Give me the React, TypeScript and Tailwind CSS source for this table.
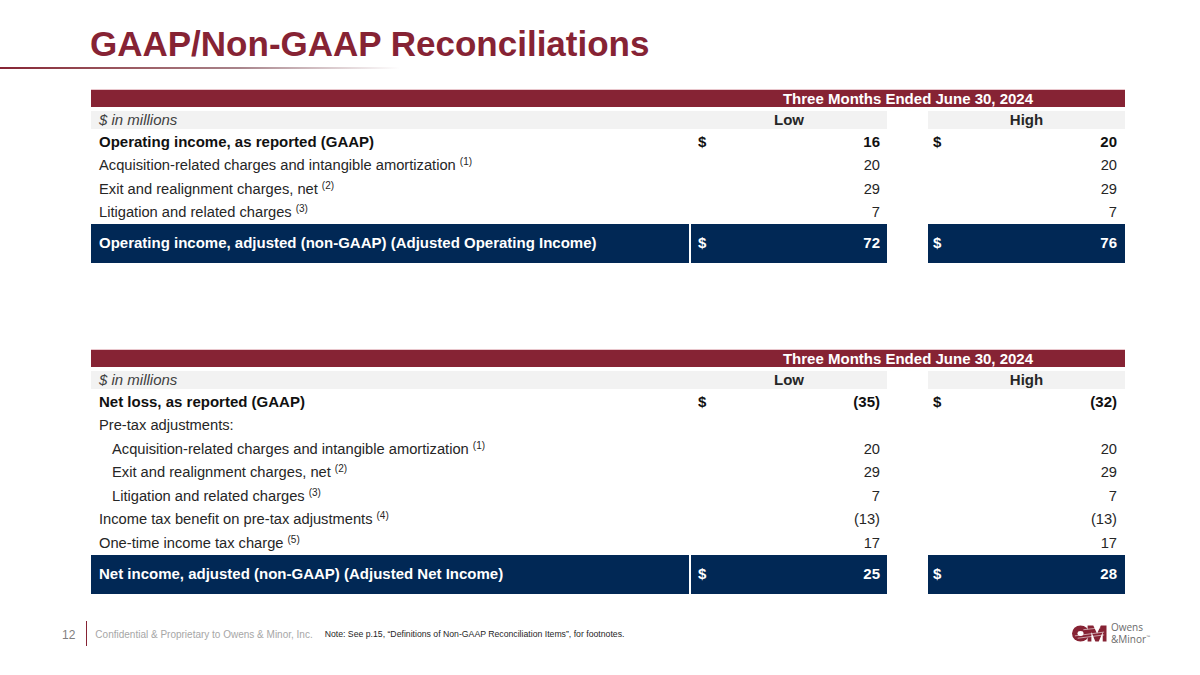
import React from "react";

const MAROON = "bg-[#862334]";

type Line = {
  label: string;
  note?: string;
  low?: string;
  high?: string;
  bold?: boolean;
  dollar?: boolean;
  indent?: boolean;
};

const opRows: Line[] = [
  { label: "Operating income, as reported (GAAP)", low: "16", high: "20", bold: true, dollar: true },
  { label: "Acquisition-related charges and intangible amortization", note: "(1)", low: "20", high: "20" },
  { label: "Exit and realignment charges, net", note: "(2)", low: "29", high: "29" },
  { label: "Litigation and related charges", note: "(3)", low: "7", high: "7" },
];

const netRows: Line[] = [
  { label: "Net loss, as reported (GAAP)", low: "(35)", high: "(32)", bold: true, dollar: true },
  { label: "Pre-tax adjustments:" },
  { label: "Acquisition-related charges and intangible amortization", note: "(1)", low: "20", high: "20", indent: true },
  { label: "Exit and realignment charges, net", note: "(2)", low: "29", high: "29", indent: true },
  { label: "Litigation and related charges", note: "(3)", low: "7", high: "7", indent: true },
  { label: "Income tax benefit on pre-tax adjustments", note: "(4)", low: "(13)", high: "(13)" },
  { label: "One-time income tax charge", note: "(5)", low: "17", high: "17" },
];

function DataRow({ row }: { row: Line }) {
  const weight = row.bold ? "font-bold text-[15px] text-[#111]" : "text-[14.7px] text-[#262626]";
  return (
    <div className={`flex h-[23.5px] items-center ${weight}`}>
      <div className={`w-[600px] ${row.indent ? "pl-[21px]" : "pl-[8px]"}`}>
        {row.label}
        {row.note && <sup className="ml-[4px] text-[10px] font-normal">{row.note}</sup>}
      </div>
      <div className="flex w-[196px] justify-between pl-[7px] pr-[7px]">
        <span>{row.dollar ? "$" : ""}</span>
        <span>{row.low}</span>
      </div>
      <div className="w-[41px]" />
      <div className="flex w-[197px] justify-between pl-[5px] pr-[8px]">
        <span>{row.dollar ? "$" : ""}</span>
        <span>{row.high}</span>
      </div>
    </div>
  );
}

function RecTable({ rows, total, low, high }: { rows: Line[]; total: string; low: string; high: string }) {
  return (
    <div className="ml-[91px] w-[1034px]">
      <div className={`flex h-[18px] ${MAROON} border-t border-[#e9c6cc]`}>
        <div className="w-[600px]" />
        <div className="flex-1 text-center text-[15px] font-bold leading-[17px] text-white">
          Three Months Ended June 30, 2024
        </div>
      </div>
      <div className="mt-[4px] flex h-[18px] items-center text-[15px]">
        <div className="w-[600px] bg-[#f2f2f2] pl-[8px] italic leading-[18px] text-[#404040]">$ in millions</div>
        <div className="w-[196px] bg-[#f2f2f2] text-center font-bold leading-[18px] text-[#262626]">Low</div>
        <div className="w-[41px]" />
        <div className="w-[197px] bg-[#f2f2f2] text-center font-bold leading-[18px] text-[#262626]">High</div>
      </div>
      <div className="mt-[1px]">
        {rows.map((r, i) => (
          <DataRow key={i} row={r} />
        ))}
      </div>
      <div className="flex h-[39px] text-[15px] font-bold text-white">
        <div className="flex w-[598px] items-center bg-[#012855] pl-[8px]">{total}</div>
        <div className="w-[2px]" />
        <div className="flex w-[196px] items-center justify-between bg-[#012855] pl-[7px] pr-[7px]">
          <span>$</span>
          <span>{low}</span>
        </div>
        <div className="w-[41px]" />
        <div className="flex w-[197px] items-center justify-between bg-[#012855] pl-[5px] pr-[8px]">
          <span>$</span>
          <span>{high}</span>
        </div>
      </div>
    </div>
  );
}

function OMLogo() {
  return (
    <div className="flex items-center gap-[3px]">
      <svg width="37" height="17" viewBox="0 0 37 18">
        <ellipse cx="9" cy="9" rx="9" ry="8.6" fill="#862334" />
        <ellipse cx="9" cy="9" rx="3.2" ry="2.6" fill="#fff" />
        <polygon points="16.5,0.5 22.5,0.5 26.5,9 30.5,0.5 36.5,0.5 36.5,17.5 32.5,17.5 32.5,7.5 28.3,17.5 24.7,17.5 20.5,7.5 20.5,17.5 16.5,17.5" fill="#862334" />
        <path d="M3 11.5 L34 7.5 M6 14 L34 10.5 M12 5 L30 3" stroke="#fff" strokeWidth="0.6" fill="none" />
      </svg>
      <div className="flex flex-col text-[10px] leading-[12px] text-[#6b6b6b]" style={{ fontFamily: '"Open Sans", sans-serif' }}>
        <span>Owens</span>
        <span>&amp;Minor</span>
      </div>
      <span className="-ml-[3px] mt-[8px] self-center text-[4px] leading-[4px] text-[#6b6b6b]">™</span>
    </div>
  );
}

export default function App() {
  return (
    <div
      className="relative h-[675px] w-[1200px] overflow-hidden bg-white"
      style={{ fontFamily: '"Liberation Sans", Arial, sans-serif' }}
    >
      <h1 className="ml-[90px] mt-[26px] text-[35px] font-bold leading-[35px] text-[#862334]">
        GAAP/Non-GAAP Reconciliations
      </h1>
      <div className="mt-[6px] h-[2px] w-[400px] bg-linear-to-r from-[#862334] via-[#a8848b] via-60% to-transparent" />

      <div className="mt-[20px]">
        <RecTable
          rows={opRows}
          total="Operating income, adjusted (non-GAAP) (Adjusted Operating Income)"
          low="72"
          high="76"
        />
      </div>

      <div className="mt-[86px]">
        <RecTable
          rows={netRows}
          total="Net income, adjusted (non-GAAP) (Adjusted Net Income)"
          low="25"
          high="28"
        />
      </div>

      {/* footer */}
      <div className="mt-[27px] flex h-[25px] items-center">
        <span className="ml-[62px] pt-[3px] text-[12px] text-[#7f7f7f]">12</span>
        <div className="ml-[11px] h-[25px] w-px bg-[#862334]" />
        <span className="ml-[8px] pt-[3px] text-[10px] text-[#a6a6a6]">Confidential &amp; Proprietary to Owens &amp; Minor, Inc.</span>
        <span className="ml-[12px] pt-[3px] text-[8.7px] text-[#262626]">
          Note: See p.15, “Definitions of Non-GAAP Reconciliation Items”, for footnotes.
        </span>
        <div className="ml-auto mr-[50px]">
          <OMLogo />
        </div>
      </div>
    </div>
  );
}
